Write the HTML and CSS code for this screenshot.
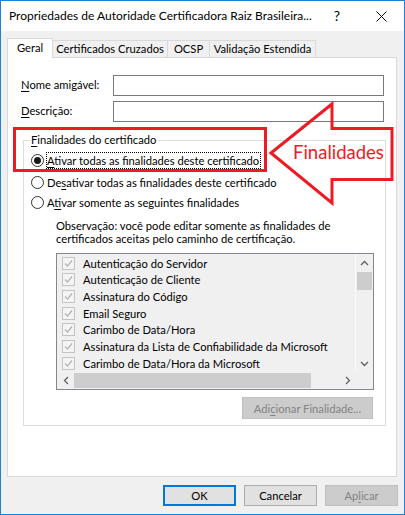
FILE: index.html
```html
<!DOCTYPE html>
<html lang="pt-BR">
<head>
<meta charset="utf-8">
<title>Propriedades</title>
<link rel="stylesheet" href="styles.css">
</head>
<body>
<div class="window">
  <div class="titlebar">
    <span class="title">Propriedades de Autoridade Certificadora Raiz Brasileira...</span>
    <span class="help">?</span>
    <span class="close"><svg width="11" height="11" viewBox="0 0 11 11"><path d="M0.5 0.5 L10.5 10.5 M10.5 0.5 L0.5 10.5" stroke="#000" stroke-width="1" fill="none"/></svg></span>
  </div>
  <div class="body">
    <div class="tabs">
      <div class="tab active t1">Geral</div>
      <div class="tab t2">Certificados Cruzados</div>
      <div class="tab t3">OCSP</div>
      <div class="tab t4">Validação Estendida</div>
    </div>
    <div class="panel">
      <div class="field"><span class="field-label"><u>N</u>ome amigável:</span><div class="input"></div></div>
      <div class="field"><span class="field-label"><u>D</u>escrição:</span><div class="input"></div></div>
      <fieldset class="group">
        <legend><u>F</u>inalidades do certificado</legend>
        <div class="radio checked r1"><span class="circle"></span><span class="focus"><u>A</u>tivar todas as finalidades deste certificado</span></div>
        <div class="radio r2"><span class="circle"></span><span class="rtext">De<u>s</u>ativar todas as finalidades deste certificado</span></div>
        <div class="radio r3"><span class="circle"></span><span class="rtext">A<u>t</u>ivar somente as seguintes finalidades</span></div>
        <p class="note">Observação: você pode editar somente as finalidades de<br>certificados aceitas pelo caminho de certificação.</p>
        <div class="list">
          <div class="items">
            <div class="item"><span class="check"><svg width="11" height="11" viewBox="0 0 11 11"><path d="M2 5.5 L4.5 8 L9 2.5" stroke="#b4b4b4" stroke-width="1.2" fill="none"/></svg></span>Autenticação do Servidor</div>
            <div class="item"><span class="check"><svg width="11" height="11" viewBox="0 0 11 11"><path d="M2 5.5 L4.5 8 L9 2.5" stroke="#b4b4b4" stroke-width="1.2" fill="none"/></svg></span>Autenticação de Cliente</div>
            <div class="item"><span class="check"><svg width="11" height="11" viewBox="0 0 11 11"><path d="M2 5.5 L4.5 8 L9 2.5" stroke="#b4b4b4" stroke-width="1.2" fill="none"/></svg></span>Assinatura do Código</div>
            <div class="item"><span class="check"><svg width="11" height="11" viewBox="0 0 11 11"><path d="M2 5.5 L4.5 8 L9 2.5" stroke="#b4b4b4" stroke-width="1.2" fill="none"/></svg></span>Email Seguro</div>
            <div class="item"><span class="check"><svg width="11" height="11" viewBox="0 0 11 11"><path d="M2 5.5 L4.5 8 L9 2.5" stroke="#b4b4b4" stroke-width="1.2" fill="none"/></svg></span>Carimbo de Data/Hora</div>
            <div class="item"><span class="check"><svg width="11" height="11" viewBox="0 0 11 11"><path d="M2 5.5 L4.5 8 L9 2.5" stroke="#b4b4b4" stroke-width="1.2" fill="none"/></svg></span>Assinatura da Lista de Confiabilidade da Microsoft</div>
            <div class="item"><span class="check"><svg width="11" height="11" viewBox="0 0 11 11"><path d="M2 5.5 L4.5 8 L9 2.5" stroke="#b4b4b4" stroke-width="1.2" fill="none"/></svg></span>Carimbo de Data/Hora da Microsoft</div>
          </div>
          <div class="vscroll">
            <div class="sbtn"><svg width="9" height="6" viewBox="0 0 9 6"><path d="M1 5 L4.5 1.5 L8 5" stroke="#606060" stroke-width="1.3" fill="none"/></svg></div>
            <div class="vthumb"></div>
            <div class="vtrack"></div>
            <div class="sbtn"><svg width="9" height="6" viewBox="0 0 9 6"><path d="M1 1 L4.5 4.5 L8 1" stroke="#606060" stroke-width="1.3" fill="none"/></svg></div>
          </div>
          <div class="hscroll">
            <div class="sbtn"><svg width="6" height="9" viewBox="0 0 6 9"><path d="M5 1 L1.5 4.5 L5 8" stroke="#606060" stroke-width="1.3" fill="none"/></svg></div>
            <div class="hthumb"></div>
            <div class="htrack"></div>
            <div class="sbtn"><svg width="6" height="9" viewBox="0 0 6 9"><path d="M1 1 L4.5 4.5 L1 8" stroke="#606060" stroke-width="1.3" fill="none"/></svg></div>
          </div>
          <div class="corner"></div>
        </div>
        <div class="add-row"><button class="btn disabled add" type="button">Adi<u>c</u>ionar Finalidade...</button></div>
      </fieldset>
    </div>
    <div class="footer">
      <button class="btn default" type="button">OK</button>
      <button class="btn" type="button">Cancelar</button>
      <button class="btn disabled" type="button">Ap<u>l</u>icar</button>
    </div>
  </div>
</div>
<svg class="annot" width="405" height="515" viewBox="0 0 405 515">
  <rect x="14.5" y="128.5" width="251" height="42" fill="none" stroke="#ed1c24" stroke-width="3"/>
  <polygon points="271,153 332,104 332,128.5 392,128.5 392,179.5 332,179.5 332,203" fill="none" stroke="#ed1c24" stroke-width="3"/>
</svg>
<span class="annot-text">Finalidades</span>
</body>
</html>
```
FILE: styles.css
```css
* { box-sizing: border-box; }
html, body { margin: 0; padding: 0; }
body {
  position: relative;
  width: 405px;
  height: 515px;
  overflow: hidden;
  font-family: Lato, "Noto Sans", sans-serif;
  font-size: 11.2px;
  color: #000;
  background: #fff;
}
u { text-decoration: underline; text-decoration-thickness: 1px; text-underline-offset: 2px; }

.window {
  width: 405px;
  height: 515px;
  border: 1px solid #1883d7;
  display: flex;
  flex-direction: column;
  background: #f0f0f0;
}
.titlebar {
  flex: none;
  height: 30px;
  background: #fff;
  display: flex;
  align-items: center;
}
.title { flex: 1; padding-left: 8px; white-space: nowrap; font-size: 12px; line-height: 16px; }
.help { width: 46px; text-align: center; padding-left: 4px; font-size: 14px; line-height: 16px; }
.close { width: 46px; height: 30px; display: flex; align-items: center; justify-content: center; padding-left: 1px; }

.body { flex: 1; display: flex; flex-direction: column; padding: 7px 6px 0 6px; }

.tabs { display: flex; align-items: flex-end; height: 19px; position: relative; z-index: 1; }
.tab {
  height: 17px;
  border: 1px solid #d9d9d9;
  border-bottom: none;
  background: #f0f0f0;
  margin-left: -1px;
  text-align: center;
  line-height: 16px;
  padding-top: 0;
  white-space: nowrap;
}
.tab.active { height: 20px; background: #fff; margin-left: 0; margin-bottom: -1px; position: relative; z-index: 2; padding-top: 1px; }
.t1 { width: 46px; }
.t2 { width: 116px; }
.t3 { width: 43px; }
.t4 { width: 107px; }

.panel {
  width: 390px;
  height: 420px;
  background: #fff;
  border: 1px solid #d9d9d9;
  padding: 17px 0 0 13px;
}
.field { display: flex; align-items: center; height: 21px; }
.field + .field { margin-top: 5px; }
.field-label { width: 92px; padding-bottom: 2px; }
.input { width: 271px; height: 21px; border: 1px solid #7a7a7a; background: #fff; }

.group {
  margin: 11px 0 0 2px;
  width: 363px;
  min-width: 0;
  border: 1px solid #dcdcdc;
  padding: 0 0 6px 7px;
}
.group legend { padding: 0 1px; margin-left: -1px; line-height: 14px; }

.radio { display: flex; align-items: center; height: 17px; }
.r1 { margin-top: 5px; }
.r2 { margin-top: 5px; }
.r3 { margin-top: 3px; }
.circle {
  flex: none;
  width: 13px;
  height: 13px;
  border: 1px solid #333;
  border-radius: 50%;
  background: #fff;
  display: flex;
  align-items: center;
  justify-content: center;
}
.checked .circle::after { content: ""; width: 7px; height: 7px; border-radius: 50%; background: #1a1a1a; }
.rtext { margin-left: 3px; white-space: nowrap; }
.focus { margin-left: 2px; border: 1px dotted #000; height: 17px; line-height: 15px; white-space: nowrap; padding-right: 1px; }

.note { margin: 8px 0 0 25px; line-height: 13px; }

.list {
  margin: 8px 0 0 25px;
  width: 318px;
  height: 137px;
  border: 1px solid #828790;
  background: #f0f0f0;
  display: grid;
  grid-template-columns: 299px 17px;
  grid-template-rows: 118px 17px;
}
.items { overflow: hidden; padding-top: 1px; border-right: 1px solid #fafafa; }
.item { display: flex; align-items: center; height: 16.67px; white-space: nowrap; }
.check {
  flex: none;
  width: 13px;
  height: 13px;
  margin: 0 8px 0 5px;
  border: 1px solid #c4c4c4;
  background: #f4f4f4;
  display: flex;
  align-items: center;
  justify-content: center;
}
.check svg { display: block; }
.vscroll { display: flex; flex-direction: column; background: #f0f0f0; }
.sbtn { flex: none; width: 17px; height: 17px; display: flex; align-items: center; justify-content: center; }
.vthumb { flex: none; height: 18px; margin: 1px 1px 0; background: #cdcdcd; }
.vtrack { flex: 1; }
.hscroll { display: flex; background: #f0f0f0; }
.hthumb { flex: none; width: 237px; margin: 1px 0; background: #cdcdcd; }
.htrack { flex: 1; }
.corner { background: #f0f0f0; }

.add-row { display: flex; justify-content: flex-end; padding-right: 12px; margin-top: 7px; }

.btn {
  font: inherit;
  color: #000;
  width: 73px;
  height: 21px;
  padding: 0;
  background: #e1e1e1;
  border: 1px solid #adadad;
  text-align: center;
  line-height: 17px;
}
.btn.default { border: 2px solid #0078d7; }
.btn.disabled { background: #cccccc; border-color: #bfbfbf; color: #838383; }
.btn.add { width: 131px; height: 22px; }

.footer { display: flex; justify-content: flex-end; gap: 8px; margin-top: 8px; }

.annot { position: absolute; left: 0; top: 0; pointer-events: none; }
.annot-text {
  position: absolute;
  left: 293px;
  top: 140px;
  font-size: 18.5px;
  line-height: 24px;
  color: #ed1c24;
  white-space: nowrap;
}
```
